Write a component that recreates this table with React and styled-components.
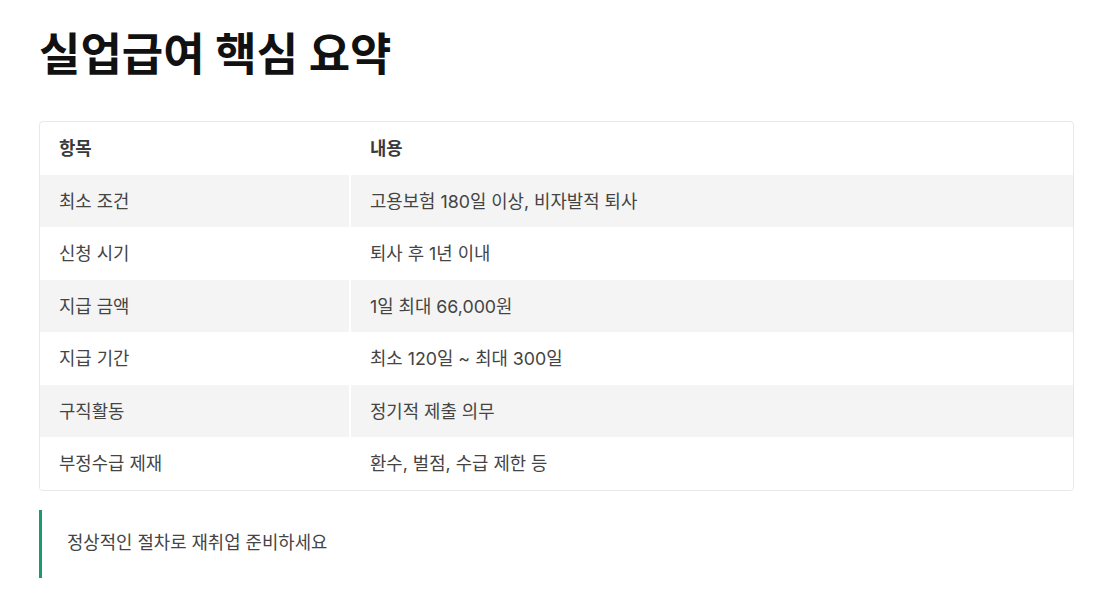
import styled, { createGlobalStyle } from "styled-components";

const GlobalStyle = createGlobalStyle`
  body {
    margin: 0;
    background: #fff;
    font-family: Inter, "Noto Sans CJK KR", "Noto Sans", sans-serif;
    color: #333;
  }
`

const rows = [
    ["최소 조건", "고용보험 180일 이상, 비자발적 퇴사"],
    ["신청 시기", "퇴사 후 1년 이내"],
    ["지급 금액", "1일 최대 66,000원"],
    ["지급 기간", "최소 120일 ~ 최대 300일"],
    ["구직활동", "정기적 제출 의무"],
    ["부정수급 제재", "환수, 벌점, 수급 제한 등"],
];

function App() {
    return (
        <>
            <GlobalStyle />
            <Page>
                <Title>실업급여 핵심 요약</Title>
                <TableBox>
                    <Table>
                        <thead>
                            <tr>
                                <Th>항목</Th>
                                <Th>내용</Th>
                            </tr>
                        </thead>
                        <tbody>
                            {rows.map(([k, v], i) => (
                                <Row key={k} $shaded={i % 2 === 0}>
                                    <Td>{k}</Td>
                                    <Td>{v}</Td>
                                </Row>
                            ))}
                        </tbody>
                    </Table>
                </TableBox>
                <Quote>정상적인 절차로 재취업 준비하세요</Quote>
            </Page>
        </>
    );
}

export default App;

const Page = styled.div`
    padding: 20px 33px 16px 39px;
`

const Title = styled.h1`
    margin: 0 0 31px;
    font-size: 45px;
    font-weight: 700;
    line-height: 70px;
    color: #111;
`

const TableBox = styled.div`
    border: 1px solid #e8e8e8;
    border-radius: 4px;
    overflow: hidden;
`

const Table = styled.table`
    width: 100%;
    border-collapse: collapse;
    table-layout: fixed;
    font-size: 17.8px;
`

const Th = styled.th`
    text-align: left;
    font-weight: 700;
    color: #3a3a3a;
    height: 50.5px;
    padding: 0 19px 2px;
    &:first-child { width: 271px; border-right: 2px solid #fff; }
`

const Row = styled.tr`
    background: ${p => p.$shaded ? "#f4f4f4" : "#fff"};
`

const Td = styled.td`
    height: 50.5px;
    padding: 0 19px 2px;
    color: #444;
    &:first-child { border-right: 2px solid #fff; }
`

const Quote = styled.blockquote`
    margin: 19px 0 0;
    border-left: 3px solid #1a9a6e;
    padding: 22px 25px 24px;
    font-size: 17.8px;
    line-height: 22px;
    color: #444;
`
